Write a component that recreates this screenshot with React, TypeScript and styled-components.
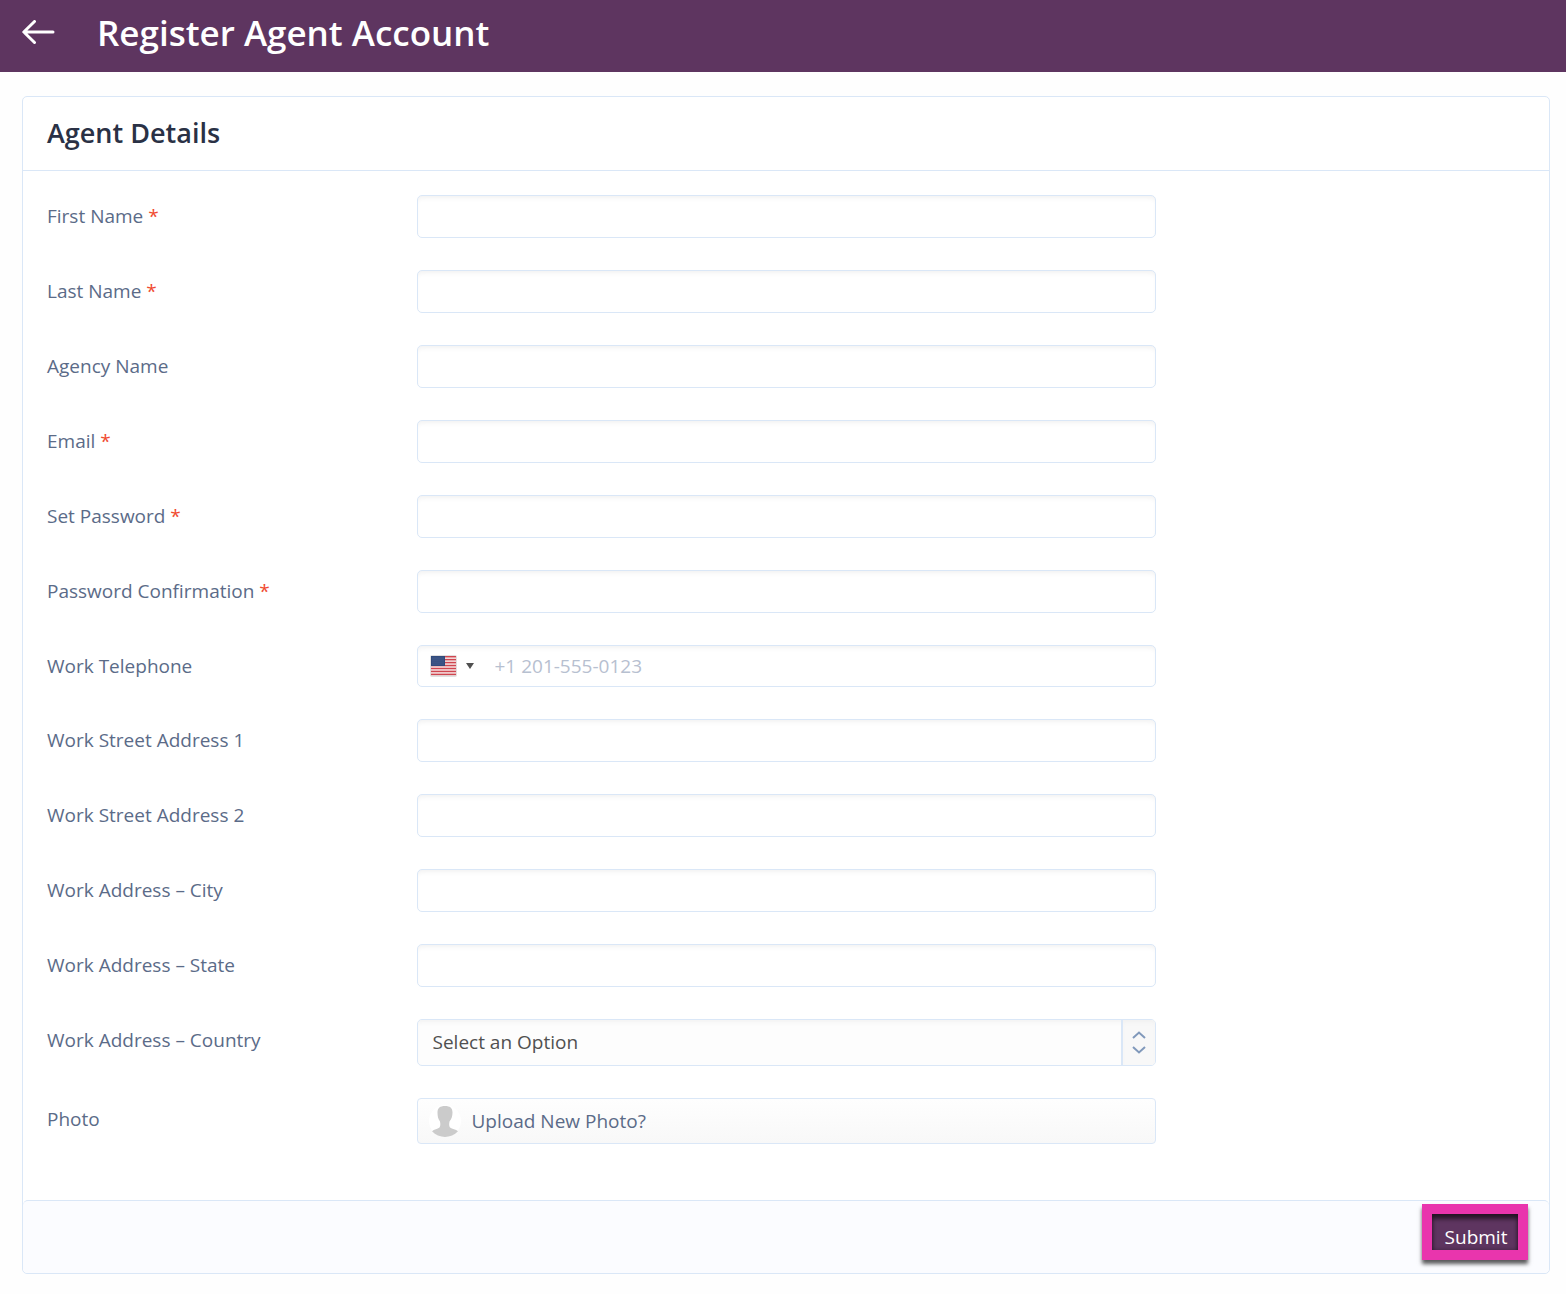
import React from "react";
import styled, { createGlobalStyle } from "styled-components";

const line = "#dae7f7";
const slate = "#5b6b88";
const plum = "#5e3560";

const GlobalStyle = createGlobalStyle`
  *, *::before, *::after { box-sizing: border-box; }
  body {
    margin: 0;
    background: #fefefe;
    color: ${slate};
    font: 19px/27px "Open Sans", "Noto Sans", sans-serif;
  }
  button, input, select { font: inherit; }
`;

const TopBar = styled.header`
  display: flex;
  align-items: center;
  gap: 42px;
  min-height: 72px;
  padding: 0 22px 6px;
  background: ${plum};
  color: #fff;
`;

const BackLink = styled.a`
  display: flex;
  color: inherit;
`;

const Title = styled.h1`
  margin: 0;
  font-size: 35px;
  line-height: 48px;
  font-weight: 600;
`;

const Card = styled.form`
  margin: 24px 16px 20px 22px;
  border: 1px solid ${line};
  border-radius: 5px;
  background: #fff;
`;

const CardHeader = styled.div`
  padding: 15px 24px 17px;
  border-bottom: 1px solid ${line};
`;

const CardTitle = styled.h2`
  margin: 0;
  font-size: 27px;
  line-height: 41px;
  font-weight: 600;
  color: #2a3145;
`;

const Fields = styled.div`
  display: flex;
  flex-direction: column;
  gap: 32px;
  padding: 24px 24px 56px;
`;

const Row = styled.div`
  display: grid;
  grid-template-columns: 1fr 2fr 1fr;
  align-items: start;
`;

const Label = styled.label`
  line-height: 42px;
`;

const Required = styled.span`
  color: #f04a30;
`;

const Input = styled.input`
  width: 100%;
  height: 43px;
  padding: 0 15px;
  border: 1px solid ${line};
  border-radius: 5px;
  outline: none;
  background: #fff;
  box-shadow: inset 0 4px 5px -2px #f2f2f2;
  color: #505050;
`;

const PhoneBox = styled.div`
  display: flex;
  height: 42px;
  border: 1px solid ${line};
  border-radius: 5px;
  background: #fff;
  box-shadow: inset 0 4px 5px -2px #f2f2f2;
`;

const FlagButton = styled.button`
  display: flex;
  align-items: center;
  gap: 9px;
  padding: 0 6px 0 12px;
  border: 0;
  background: none;
`;

const PhoneInput = styled.input`
  flex: 1;
  min-width: 0;
  padding: 0 15px;
  border: 0;
  outline: none;
  background: none;
  color: #505050;
  &::placeholder { color: #b7c0d0; opacity: 1; }
`;

const SelectBox = styled.div`
  display: grid;
  grid-template-columns: 1fr 34px;
  height: 47px;
  border: 1px solid ${line};
  border-radius: 5px;
  overflow: hidden;
  background: #fdfdfd;
`;

const Select = styled.select`
  grid-area: 1 / 1 / 2 / 3;
  appearance: none;
  padding: 0 49px 0 15px;
  border: 0;
  outline: none;
  background: none;
  box-shadow: inset 0 4px 5px -2px #f2f2f2;
  color: #505050;
`;

const SelectArrows = styled.span`
  grid-area: 1 / 2 / 2 / 3;
  display: flex;
  align-items: center;
  justify-content: center;
  border-left: 2px solid ${line};
  background: #f8f8f8;
  box-shadow: inset 0 4px 5px -2px #f0f0f0;
  pointer-events: none;
`;

const UploadButton = styled.button`
  display: flex;
  align-items: center;
  gap: 11px;
  height: 46px;
  padding: 0 11px;
  border: 1px solid ${line};
  border-radius: 4px;
  background: linear-gradient(#fefefe, #f8f8f8);
  color: ${slate};
`;

const Footer = styled.div`
  display: flex;
  justify-content: flex-end;
  align-items: flex-start;
  height: 73px;
  padding: 3px 21px 0;
  border-top: 1px solid ${line};
  border-radius: 5px;
  background: #fbfcff;
`;

const Highlight = styled.div`
  display: flex;
  border: 10px solid #e935ad;
  box-shadow: 0 4px 4px rgba(0, 0, 0, 0.65);
`;

const SubmitButton = styled.button`
  width: 86px;
  height: 36px;
  padding: 10px 0 0 2px;
  border: 0;
  background: ${plum};
  box-shadow: inset 0 5px 4px rgba(0, 0, 0, 0.55), inset 0 0 4px rgba(0, 0, 0, 0.35);
  color: #fff;
  line-height: 26px;
`;

const BackArrow = () => (
  <svg width="33" height="26" viewBox="0 0 33 26" fill="none" stroke="currentColor" strokeWidth="3" strokeLinecap="round" strokeLinejoin="round" aria-hidden="true">
    <path d="M12.500 1.500 1.800 12 12.500 22.500M2 12H31" />
  </svg>
);

const starRows = [2, 4, 6, 8];
const starCols = [2, 4, 6, 8, 10, 12];
const stripes = [0, 1, 2, 3, 4, 5, 6];

const UsFlag = () => (
  <svg width="27" height="22" viewBox="0 0 27 22" aria-hidden="true">
    <rect x="0" y="0" width="27" height="22" rx="2" fill="#e2e0e0" />
    <rect x="1" y="1" width="25" height="19" fill="#f5dfdf" />
    {stripes.map((i) => (
      <rect key={i} x="1" y={1 + i * 2.95} width="25" height="1.4" fill="#cf4650" />
    ))}
    <rect x="1" y="1" width="14" height="10" fill="#304a7c" />
    {starRows.map((y) =>
      starCols.map((x) => <circle key={`${x}-${y}`} cx={x + 1} cy={y + 1} r="0.4" fill="#91a2c4" />)
    )}
  </svg>
);

const Caret = () => (
  <svg width="8" height="6" viewBox="0 0 8 6" aria-hidden="true">
    <path d="M0 0H8L4 6Z" fill="#505050" />
  </svg>
);

const UpDown = () => (
  <svg width="14" height="24" viewBox="0 0 14 24" fill="none" stroke="#8199bb" strokeWidth="2" aria-hidden="true">
    <path d="M1 7 7 1.500 13 7M1 16 7 21.500 13 16" />
  </svg>
);

const Avatar = () => (
  <svg width="32" height="32" viewBox="0 0 32 32" aria-hidden="true">
    <circle cx="16" cy="16" r="16" fill="#fff" />
    <path
      d="M16 1C11 1 8.500 3 8.500 7.500C8.500 11 9 14 11 16.500C11.500 19 11.500 21 10.500 22.500C8.500 24.300 5 24.300 3 26.300C6.500 30.300 11 32 16 32C21 32 25.500 30.300 29 26.300C27 24.300 23 24.300 21 22.500C20 21 20 19 20.500 16.500C22.500 14 23.500 11 23.500 7.500C23.500 3 21 1 16 1Z"
      fill="#cbcbcb"
    />
  </svg>
);

type FieldProps = {
  id: string;
  label: string;
  required?: boolean;
  children: React.ReactNode;
};

const Field = ({ id, label, required, children }: FieldProps) => (
  <Row>
    <Label htmlFor={id}>
      {label}
      {required && <Required> *</Required>}
    </Label>
    {children}
  </Row>
);

const nameFields = [
  { id: "first-name", label: "First Name", required: true, type: "text" },
  { id: "last-name", label: "Last Name", required: true, type: "text" },
  { id: "agency", label: "Agency Name", required: false, type: "text" },
  { id: "email", label: "Email", required: true, type: "email" },
  { id: "password", label: "Set Password", required: true, type: "password" },
  { id: "password-confirmation", label: "Password Confirmation", required: true, type: "password" },
];

const addressFields = [
  { id: "street-1", label: "Work Street Address 1" },
  { id: "street-2", label: "Work Street Address 2" },
  { id: "city", label: "Work Address – City" },
  { id: "state", label: "Work Address – State" },
];

export default function App() {
  return (
    <>
      <GlobalStyle />
      <TopBar>
        <BackLink href="#" aria-label="Back">
          <BackArrow />
        </BackLink>
        <Title>Register Agent Account</Title>
      </TopBar>
      <main>
        <Card noValidate onSubmit={(event) => event.preventDefault()}>
          <CardHeader>
            <CardTitle>Agent Details</CardTitle>
          </CardHeader>
          <Fields>
            {nameFields.map((f) => (
              <Field key={f.id} id={f.id} label={f.label} required={f.required}>
                <Input id={f.id} type={f.type} required={f.required} />
              </Field>
            ))}
            <Field id="telephone" label="Work Telephone">
              <PhoneBox>
                <FlagButton type="button" aria-label="Country code">
                  <UsFlag />
                  <Caret />
                </FlagButton>
                <PhoneInput id="telephone" type="tel" placeholder="+1 201-555-0123" />
              </PhoneBox>
            </Field>
            {addressFields.map((f) => (
              <Field key={f.id} id={f.id} label={f.label}>
                <Input id={f.id} type="text" />
              </Field>
            ))}
            <Field id="country" label="Work Address – Country">
              <SelectBox>
                <Select id="country" defaultValue="">
                  <option value="">Select an Option</option>
                </Select>
                <SelectArrows>
                  <UpDown />
                </SelectArrows>
              </SelectBox>
            </Field>
            <Field id="photo" label="Photo">
              <UploadButton id="photo" type="button">
                <Avatar />
                Upload New Photo?
              </UploadButton>
            </Field>
          </Fields>
          <Footer>
            <Highlight>
              <SubmitButton type="submit">Submit</SubmitButton>
            </Highlight>
          </Footer>
        </Card>
      </main>
    </>
  );
}
